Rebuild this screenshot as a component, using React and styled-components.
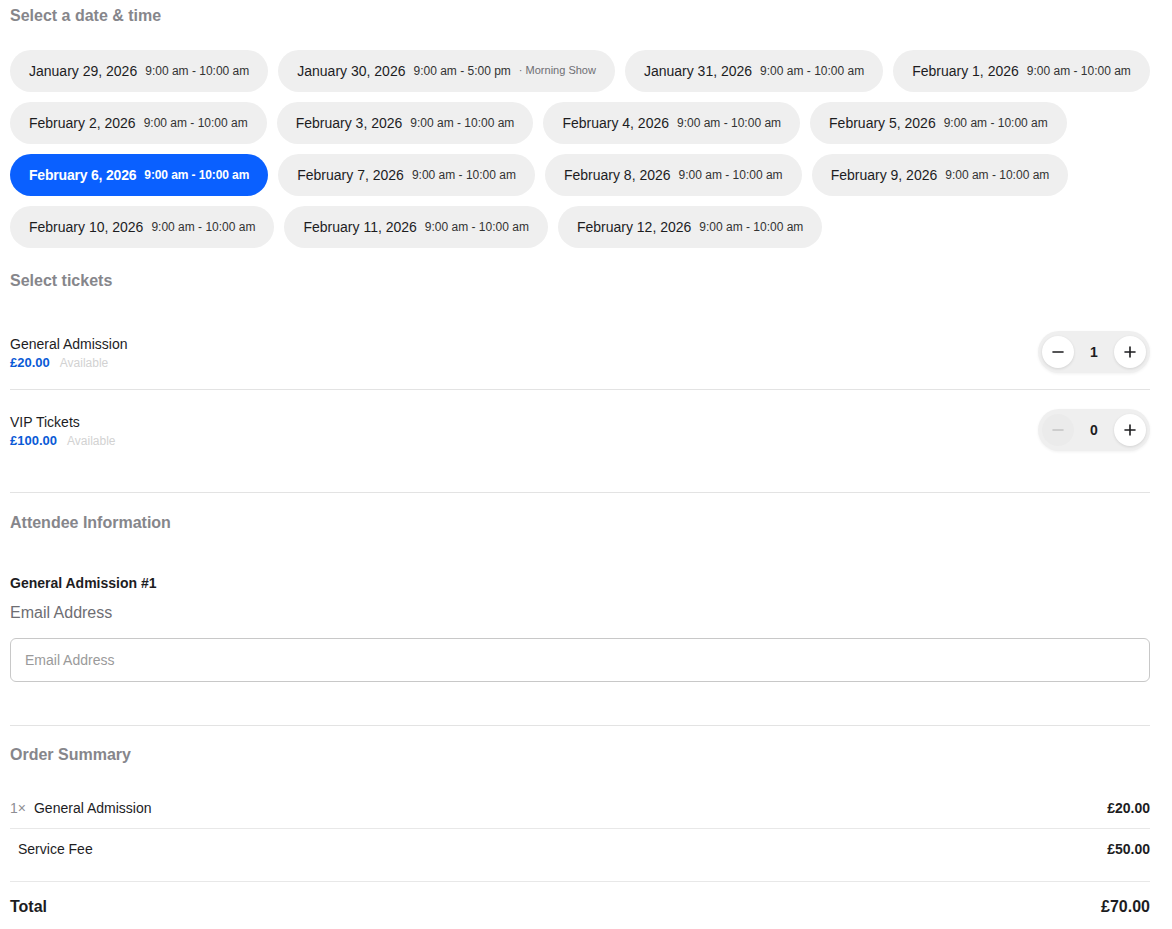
import React from 'react';
import styled, { createGlobalStyle } from 'styled-components';

const GlobalStyle = createGlobalStyle`
  body {
    margin: 0;
    background: #ffffff;
    font-family: "Liberation Sans", Arial, sans-serif;
    color: #1d1d1f;
  }
`;

const Page = styled.div`
  padding: 6px 22px 0 10px;
  display: flex;
  flex-direction: column;
`;

const Heading = styled.h2`
  font-size: 16px;
  line-height: 20px;
  font-weight: 700;
  color: #86868b;
  margin: 0;
`;

const Pills = styled.div`
  display: flex;
  flex-wrap: wrap;
  gap: 10px;
  margin-top: 24px;
  margin-bottom: 23px;
`;

const Pill = styled.button`
  display: flex;
  align-items: center;
  gap: 8px;
  height: 42px;
  padding: 0 19px;
  border: none;
  border-radius: 21px;
  background: ${p => (p.active ? '#0a60ff' : '#efefef')};
  color: ${p => (p.active ? '#ffffff' : '#1d1d1f')};
  font-family: inherit;
  cursor: pointer;
`;

const PillDate = styled.span`
  font-size: 14px;
  font-weight: ${p => (p.active ? 700 : 400)};
  letter-spacing: ${p => (p.active ? '-0.2px' : '0')};
`;

const PillTime = styled.span`
  font-size: 12px;
  font-weight: ${p => (p.active ? 700 : 400)};
  letter-spacing: ${p => (p.active ? '-0.1px' : '0')};
  color: ${p => (p.active ? '#ffffff' : '#333')};
`;

const PillNote = styled.span`
  font-size: 11px;
  color: #6e6e73;
  margin-top: -2px;
`;

const TicketList = styled.div`
  display: flex;
  flex-direction: column;
  margin-top: 22px;
`;

const TicketRow = styled.div`
  display: flex;
  align-items: center;
  justify-content: space-between;
  padding: ${p => (p.last ? '19px 0 41px' : '18px 0 16px')};
  border-bottom: 1px solid #e3e3e3;
`;

const TicketInfo = styled.div`
  display: flex;
  flex-direction: column;
  gap: 2px;
  padding-top: 2px;
`;

const TicketName = styled.div`
  font-size: 14px;
  line-height: 17px;
`;

const TicketMeta = styled.div`
  display: flex;
  align-items: baseline;
  gap: 10px;
  font-size: 12px;
  line-height: 16px;
`;

const Price = styled.span`
  color: #0a5ad6;
  font-weight: 700;
  font-size: 13px;
`;

const Avail = styled.span`
  color: #d2d2d2;
`;

const Stepper = styled.div`
  display: flex;
  align-items: center;
  justify-content: space-between;
  width: 112px;
  height: 42px;
  padding: 0 4px;
  box-sizing: border-box;
  border-radius: 21px;
  background: #efefef;
  box-shadow: 0 1px 3px rgba(0, 0, 0, 0.06);
`;

const StepButton = styled.button`
  width: 32px;
  height: 32px;
  border-radius: 50%;
  border: none;
  padding: 0;
  display: flex;
  align-items: center;
  justify-content: center;
  background: ${p => (p.disabled ? '#ebebeb' : '#ffffff')};
  color: ${p => (p.disabled ? '#c4c4c4' : '#1d1d1f')};
  box-shadow: ${p => (p.disabled ? 'none' : '0 1px 3px rgba(0,0,0,0.12)')};
  cursor: pointer;
`;

const Count = styled.span`
  font-size: 14px;
  font-weight: 700;
`;

const Section = styled.div`
  display: flex;
  flex-direction: column;
  padding-top: ${p => p.top || '19px'};
`;

const AttendeeTitle = styled.div`
  font-size: 14px;
  font-weight: 700;
  line-height: 17px;
  margin-top: 42px;
`;

const Label = styled.label`
  font-size: 16px;
  line-height: 20px;
  color: #6e6e73;
  margin-top: 11px;
`;

const Input = styled.input`
  margin-top: 15px;
  height: 44px;
  box-sizing: border-box;
  border: 1px solid #c8c8c8;
  border-radius: 6px;
  padding: 0 14px;
  font-family: inherit;
  font-size: 14px;
  &::placeholder {
    color: #9a9a9a;
  }
`;

const Divider = styled.hr`
  border: none;
  border-top: 1px solid #e3e3e3;
  margin: ${p => p.m || '0'};
`;

const SummaryRow = styled.div`
  display: flex;
  justify-content: space-between;
  align-items: center;
  font-size: 14px;
  padding: ${p => p.pad};
  border-bottom: ${p => (p.line ? '1px solid #e8e8e8' : 'none')};
`;

const SummaryLabel = styled.span`
  display: flex;
  align-items: center;
  gap: 8px;
  padding-left: ${p => p.indent || '0'};
`;

const Qty = styled.span`
  color: #8e8e93;
`;

const Amount = styled.span`
  font-weight: 700;
`;

const TotalRow = styled.div`
  display: flex;
  justify-content: space-between;
  font-size: 16px;
  font-weight: 700;
  padding-top: 16px;
`;

const dates = [
  ['January 29, 2026', '9:00 am - 10:00 am'],
  ['January 30, 2026', '9:00 am - 5:00 pm', '· Morning Show'],
  ['January 31, 2026', '9:00 am - 10:00 am'],
  ['February 1, 2026', '9:00 am - 10:00 am'],
  ['February 2, 2026', '9:00 am - 10:00 am'],
  ['February 3, 2026', '9:00 am - 10:00 am'],
  ['February 4, 2026', '9:00 am - 10:00 am'],
  ['February 5, 2026', '9:00 am - 10:00 am'],
  ['February 6, 2026', '9:00 am - 10:00 am'],
  ['February 7, 2026', '9:00 am - 10:00 am'],
  ['February 8, 2026', '9:00 am - 10:00 am'],
  ['February 9, 2026', '9:00 am - 10:00 am'],
  ['February 10, 2026', '9:00 am - 10:00 am'],
  ['February 11, 2026', '9:00 am - 10:00 am'],
  ['February 12, 2026', '9:00 am - 10:00 am'],
];

const tickets = [
  { name: 'General Admission', price: '£20.00', qty: 1 },
  { name: 'VIP Tickets', price: '£100.00', qty: 0 },
];

const Minus = () => (
  <svg width="12" height="12" viewBox="0 0 12 12">
    <path d="M1 6h10" stroke="currentColor" strokeWidth="1.6" strokeLinecap="round" />
  </svg>
);

const Plus = () => (
  <svg width="12" height="12" viewBox="0 0 12 12">
    <path d="M1 6h10M6 1v10" stroke="currentColor" strokeWidth="1.6" strokeLinecap="round" />
  </svg>
);

export default function App() {
  return (
    <>
      <GlobalStyle />
      <Page>
        <Heading>Select a date &amp; time</Heading>
        <Pills>
          {dates.map(([d, t, note], i) => {
            const active = i === 8;
            return (
              <Pill key={d} active={active}>
                <PillDate active={active}>{d}</PillDate>
                <PillTime active={active}>{t}</PillTime>
                {note && <PillNote>{note}</PillNote>}
              </Pill>
            );
          })}
        </Pills>

        <Heading>Select tickets</Heading>
        <TicketList>
          {tickets.map((t, i) => (
            <TicketRow key={t.name} last={i === tickets.length - 1}>
              <TicketInfo>
                <TicketName>{t.name}</TicketName>
                <TicketMeta>
                  <Price>{t.price}</Price>
                  <Avail>Available</Avail>
                </TicketMeta>
              </TicketInfo>
              <Stepper>
                <StepButton disabled={t.qty === 0}>
                  <Minus />
                </StepButton>
                <Count>{t.qty}</Count>
                <StepButton>
                  <Plus />
                </StepButton>
              </Stepper>
            </TicketRow>
          ))}
        </TicketList>

        <Section top="20px">
          <Heading>Attendee Information</Heading>
          <AttendeeTitle>General Admission #1</AttendeeTitle>
          <Label>Email Address</Label>
          <Input placeholder="Email Address" />
        </Section>

        <Divider m="43px 0 0" />

        <Section>
          <Heading>Order Summary</Heading>
          <SummaryRow pad="35px 0 12px" line>
            <SummaryLabel>
              <Qty>1×</Qty> General Admission
            </SummaryLabel>
            <Amount>£20.00</Amount>
          </SummaryRow>
          <SummaryRow pad="12px 0 24px" line>
            <SummaryLabel indent="8px">Service Fee</SummaryLabel>
            <Amount>£50.00</Amount>
          </SummaryRow>
          <TotalRow>
            <span>Total</span>
            <span>£70.00</span>
          </TotalRow>
        </Section>
      </Page>
    </>
  );
}
